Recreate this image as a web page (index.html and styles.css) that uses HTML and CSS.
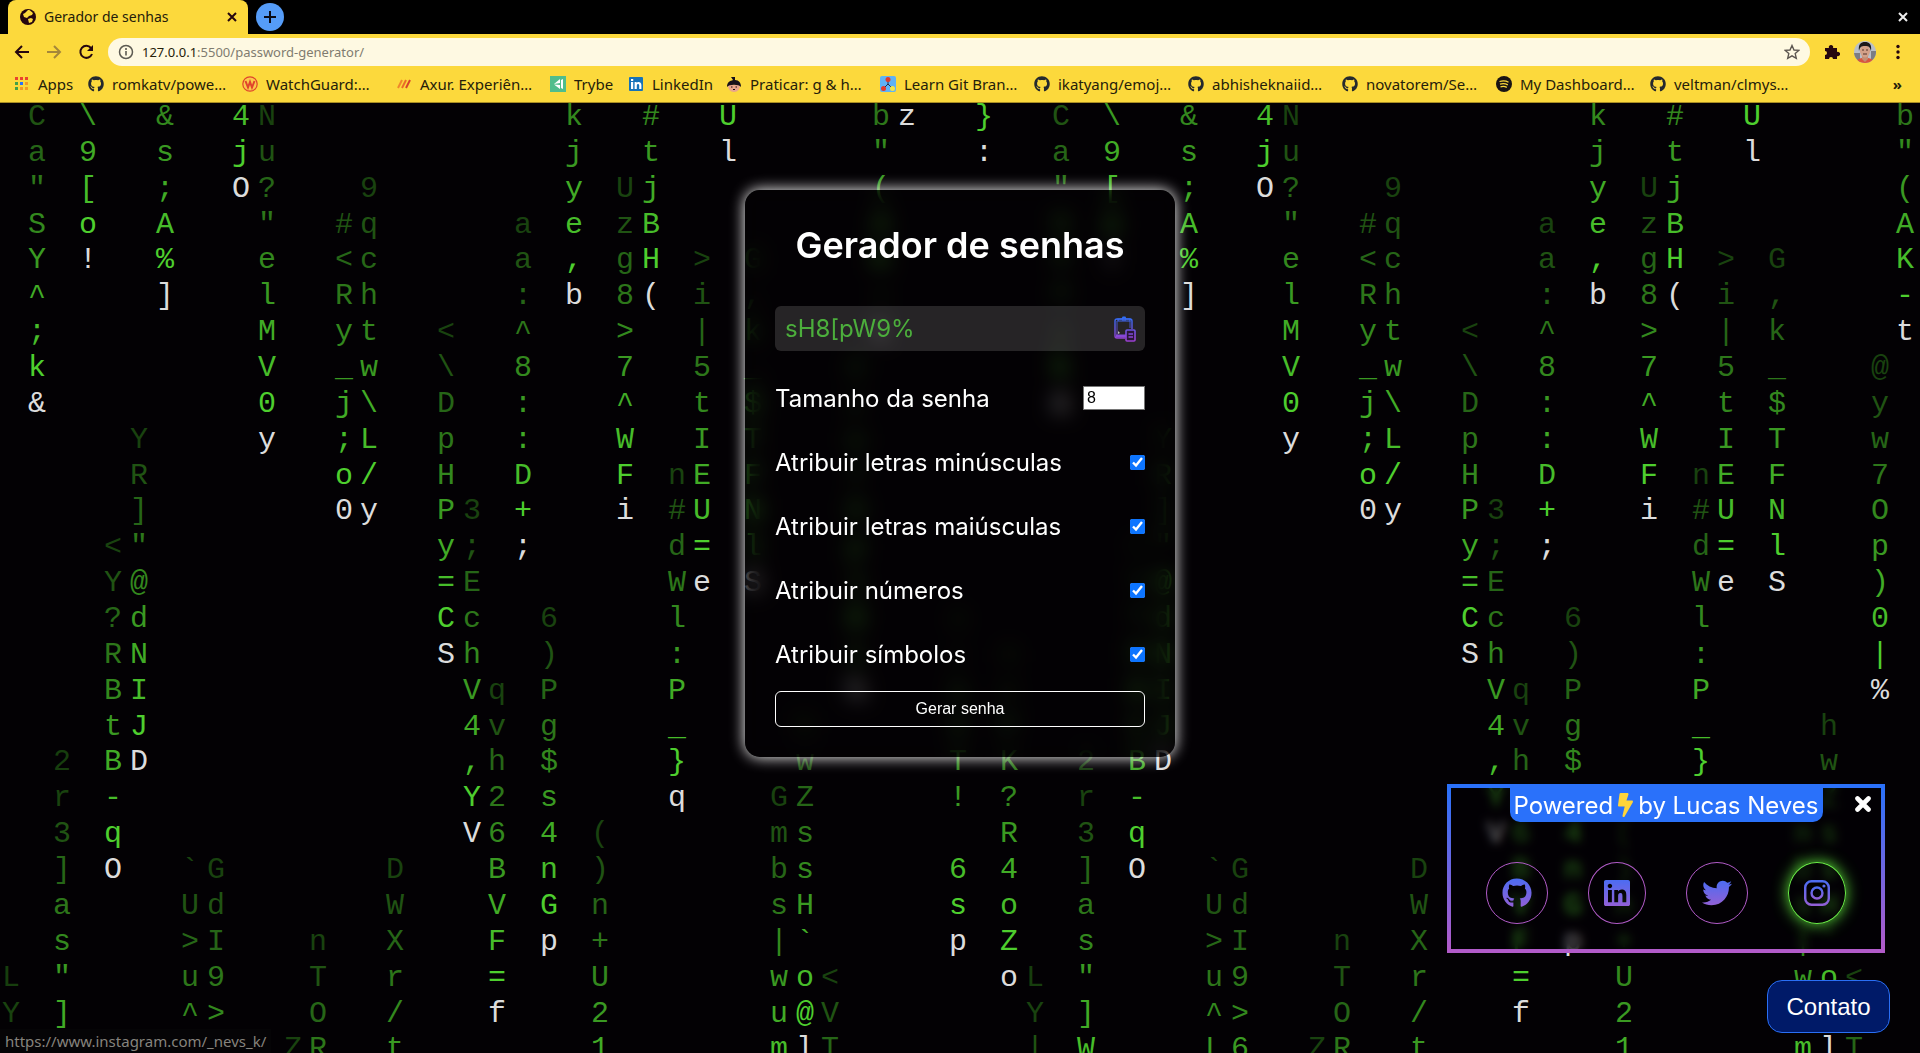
FILE: index.html
```html
<!DOCTYPE html>
<html lang="pt-BR">
<head>
<meta charset="utf-8">
<title>Gerador de senhas</title>
<link rel="stylesheet" href="styles.css">
</head>
<body>
<svg class="defs" aria-hidden="true">
  <defs>
    <linearGradient id="brand" x1="0" y1="0" x2="0" y2="1"><stop offset="0" stop-color="#4c6cf2"/><stop offset="1" stop-color="#9160d6"/></linearGradient>
    <linearGradient id="clip" gradientUnits="userSpaceOnUse" x1="0" y1="0" x2="0" y2="24"><stop offset="0" stop-color="#2a71fa"/><stop offset="1" stop-color="#9a3fd0"/></linearGradient>
    <symbol id="github" viewBox="0 0 496 512"><path d="M165.900 397.400c0 2-2.300 3.600-5.200 3.600-3.300.3-5.600-1.300-5.600-3.600 0-2 2.300-3.600 5.200-3.600 3-.3 5.600 1.300 5.600 3.600zm-31.100-4.500c-.7 2 1.300 4.300 4.300 4.900 2.600 1 5.600 0 6.200-2s-1.300-4.300-4.300-5.200c-2.600-.7-5.500.3-6.200 2.300zm44.200-1.700c-2.900.7-4.900 2.600-4.600 4.900.3 2 2.900 3.300 5.900 2.600 2.900-.7 4.900-2.600 4.600-4.600-.3-1.900-3-3.200-5.900-2.900zM244.800 8C106.100 8 0 113.300 0 252c0 110.900 69.800 205.800 169.500 239.200 12.800 2.300 17.300-5.600 17.300-12.100 0-6.200-.3-40.400-.3-61.400 0 0-70 15-84.700-29.800 0 0-11.400-29.100-27.800-36.600 0 0-22.900-15.700 1.600-15.400 0 0 24.900 2 38.600 25.800 21.900 38.600 58.600 27.500 72.900 20.900 2.300-16 8.800-27.100 16-33.700-55.900-6.200-112.300-14.300-112.300-110.500 0-27.500 7.600-41.300 23.600-58.900-2.600-6.500-11.100-33.300 2.600-67.900 20.900-6.500 69 27 69 27 20-5.600 41.500-8.500 62.800-8.500s42.800 2.900 62.800 8.500c0 0 48.100-33.600 69-27 13.700 34.700 5.200 61.400 2.600 67.900 16 17.700 25.800 31.500 25.800 58.900 0 96.500-58.900 104.200-114.800 110.500 9.200 7.900 17 22.900 17 46.400 0 33.700-.3 75.400-.3 83.600 0 6.500 4.600 14.400 17.300 12.100C428.200 457.800 496 362.900 496 252 496 113.300 383.500 8 244.800 8z"/></symbol>
  </defs>
</svg>

<div class="browser">
  <header class="chrome">
    <div class="tabstrip">
      <div class="tab">
        <svg class="i16" viewBox="0 0 16 16"><circle cx="8" cy="8" r="8" fill="#25060f"/><path d="M8 1c3 0 3 2 5 3l-1 2-3 1-2 2-3-1-1-3 2-1zM8 10l3-1 2 1-1 3-3 1z" fill="#fcd93c"/></svg>
        <span class="tab-title">Gerador de senhas</span>
        <button class="icon-btn" aria-label="Fechar aba"><svg width="10" height="10" viewBox="0 0 10 10"><path d="M1 1l8 8M9 1l-8 8" stroke="#25060f" stroke-width="2"/></svg></button>
      </div>
      <button class="new-tab" aria-label="Nova aba"><svg width="12" height="12" viewBox="0 0 12 12"><path d="M6 0v12M0 6h12" stroke="#0a0a14" stroke-width="2"/></svg></button>
      <button class="icon-btn window-close" aria-label="Fechar janela"><svg width="10" height="10" viewBox="0 0 10 10"><path d="M1 1l8 8M9 1l-8 8" stroke="#eee" stroke-width="2"/></svg></button>
    </div>
    <div class="toolbar">
      <div class="history">
        <button class="icon-btn" aria-label="Voltar"><svg width="16" height="16" viewBox="0 0 16 16"><path d="M15 8H2M8 2L2 8l6 6" fill="none" stroke="#25060f" stroke-width="2"/></svg></button>
        <button class="icon-btn" aria-label="Avançar"><svg width="16" height="16" viewBox="0 0 16 16"><path d="M1 8h13M8 2l6 6-6 6" fill="none" stroke="#a4873a" stroke-width="2"/></svg></button>
        <button class="icon-btn" aria-label="Recarregar"><svg width="16" height="16" viewBox="0 0 16 16"><path d="M13 4a6 6 0 1 0 1 6" fill="none" stroke="#25060f" stroke-width="2"/><path d="M15 1v6H9z" fill="#25060f"/></svg></button>
      </div>
      <div class="omnibox">
        <svg class="i16" viewBox="0 0 16 16"><circle cx="8" cy="8" r="6.500" fill="none" stroke="#5c5a52" stroke-width="1.500"/><path d="M8 7v4.500M8 4v2" stroke="#5c5a52" stroke-width="1.600"/></svg>
        <span class="url"><b>127.0.0.1</b>:5500/password-generator/</span>
        <svg class="i16" viewBox="0 0 16 16"><path d="M8 1.500l2 4.500 4.800.4-3.600 3.200 1.100 4.700L8 11.800l-4.300 2.500 1.100-4.700L1.200 6.400 6 6z" fill="none" stroke="#5c5650" stroke-width="1.400"/></svg>
      </div>
      <button class="icon-btn" aria-label="Extensões"><svg width="16" height="16" viewBox="0 0 16 16"><path d="M1 4h4a2.200 2.200 0 1 1 4 0h4v4a2.200 2.200 0 1 1 0 4v3H9a2 2 0 1 0-4 0H1v-4a2 2 0 1 0 0-4z" fill="#25060f"/></svg></button>
      <svg class="avatar" viewBox="0 0 22 22"><clipPath id="av"><circle cx="11" cy="11" r="11"/></clipPath><g clip-path="url(#av)"><path fill="#b9bfc8" d="M0 0h22v22H0z"/><path fill="#7c7d84" d="M0 12h6v10H0zM17 10h5v9h-5z"/><path d="M2 22c1-5 5-5 9-5s8 0 9 5z" fill="#d9563e"/><path d="M8 13h6v5l-3 3-3-3z" fill="#c48e74"/><ellipse cx="11" cy="10" rx="5" ry="6.500" fill="#d3a088"/><path d="M5 10C4 3 7 1 11 1s7 2 6 9c-1-4-2-5-6-5s-5 1-6 5z" fill="#1c181a"/><path d="M8 9h2M12 9h2M9 13h4" stroke="#54342a"/></g></svg>
      <button class="icon-btn" aria-label="Menu"><svg width="16" height="16" viewBox="0 0 16 16" fill="#25060f"><circle cx="8" cy="2.500" r="1.700"/><circle cx="8" cy="8" r="1.700"/><circle cx="8" cy="13.500" r="1.700"/></svg></button>
    </div>
    <nav class="bookmarks">
      <a href="#" class="bm bm-apps"><svg class="i16" viewBox="0 0 16 16"><path d="M1 1h3v3H1zM6 1h3v3H6zM11 1h3v3h-3z" fill="#e8432e"/><path d="M1 6h3v3H1zM1 11h3v3H1z" fill="#43a047"/><path d="M6 6h3v3H6z" fill="#2a71fa"/><path d="M11 6h3v3h-3zM6 11h3v3H6zM11 11h3v3h-3z" fill="#f59b23"/></svg>Apps</a>
      <a href="#" class="bm"><svg class="i16 gh"><use href="#github"/></svg>romkatv/powe…</a>
      <a href="#" class="bm"><svg class="i16" viewBox="0 0 16 16"><circle cx="8" cy="8" r="7.200" fill="#fbc94a" stroke="#e0442b" stroke-width="1.200"/><path d="M3.500 5l2.500 6.500L8 6l2 5.500L12.500 5" fill="none" stroke="#e0442b" stroke-width="2"/></svg>WatchGuard:…</a>
      <a href="#" class="bm"><svg class="i16" viewBox="0 0 16 16"><path d="M2 12l4-8" stroke="#f0862a" stroke-width="2"/><path d="M6 12l4-8" stroke="#ea6a2a" stroke-width="2"/><path d="M10 12l4-8" stroke="#d8432a" stroke-width="2"/></svg>Axur. Experiên…</a>
      <a href="#" class="bm bm-trybe"><svg class="i16" viewBox="0 0 16 16"><path d="M0 0h16v16H0z" fill="#50bd8c"/><path d="M4 8l6-5v4zM4 8.500L10 9v4zM11 4l2-1v10l-2-1z" fill="#fff"/></svg>Trybe</a>
      <a href="#" class="bm bm-linkedin"><svg class="i16" viewBox="0 0 16 16"><rect x="1" y="1" width="14" height="14" rx="1" fill="#1673b8"/><path d="M3 6h2.200v7H3zM3 3h2.200v2H3zM6.600 6h2v1c1-1.600 4.800-1.600 4.800 2v4h-2.200V9.500c0-2-2.400-2-2.400 0V13H6.600z" fill="#fff"/></svg>LinkedIn</a>
      <a href="#" class="bm"><svg class="i16" viewBox="0 0 16 16"><path d="M2 9h12c0 4-2 7-6 7s-6-3-6-7z" fill="#e9a58c"/><path d="M1 11C1 6 4 5 7 4L5 1l4 0v3c4 0 6 3 6 7-2-3-12-3-14 0z" fill="#17111a"/><path d="M5 11h1.500M9.500 11H11M7 13.500h2" stroke="#17111a"/></svg>Praticar: g &amp; h…</a>
      <a href="#" class="bm"><svg class="i16" viewBox="0 0 16 16"><rect width="16" height="16" rx="2" fill="#5fb2f6"/><path d="M8 4v4L4 12M8 8l4 4" stroke="#24314a" fill="none"/><circle cx="8" cy="3.500" r="2.500" fill="#e2392b"/><circle cx="3.500" cy="12.500" r="2.500" fill="#e2392b"/><circle cx="12.500" cy="12.500" r="2.500" fill="#f6e545"/></svg>Learn Git Bran…</a>
      <a href="#" class="bm"><svg class="i16 gh"><use href="#github"/></svg>ikatyang/emoj…</a>
      <a href="#" class="bm"><svg class="i16 gh"><use href="#github"/></svg>abhisheknaiid…</a>
      <a href="#" class="bm"><svg class="i16 gh"><use href="#github"/></svg>novatorem/Se…</a>
      <a href="#" class="bm"><svg class="i16" viewBox="0 0 16 16"><circle cx="8" cy="8" r="8" fill="#191414"/><path d="M3.500 5.500c3-1 6.500-.8 9 .7M4 8.200c2.600-.8 5.500-.6 7.800.7M4.500 10.800c2-.6 4.500-.5 6.300.6" fill="none" stroke="#fcd93c" stroke-width="1.300"/></svg>My Dashboard…</a>
      <a href="#" class="bm"><svg class="i16 gh"><use href="#github"/></svg>veltman/clmys…</a>
      <button class="more" aria-label="Mais favoritos">»</button>
    </nav>
  </header>

  <main class="page">
    <svg class="rain" id="rain" aria-hidden="true"></svg>
    <form class="card">
      <h1>Gerador de senhas</h1>
      <div class="password">
        <output class="password-text" for="length">sH8[pW9%</output>
        <button type="button" class="copy" aria-label="Copiar senha"><svg width="24" height="26" viewBox="0 0 24 26" fill="none" stroke="url(#clip)"><path d="M12 22H4a2 2 0 0 1-2-2V5a2 2 0 0 1 2-2h13a2 2 0 0 1 2 2v8" stroke-width="1.400"/><path d="M4 20V5M17 12V5" stroke-width=".8"/><path d="M3 20h10" stroke-width="3"/><path d="M5 5V3h4l1-2h2l1 2h4v2zM10 2h2v3h-2z" stroke-width="1.200"/><rect x="13" y="14" width="9" height="11" rx="1" stroke-width="1.600" fill="#2a1638"/><path d="M15.500 18h4.500M15.500 21h4.500" stroke-width="1.500"/><path d="M5 15l2 2-2 1z" fill="#bbb" stroke="none"/></svg></button>
      </div>
      <div class="row"><label for="length">Tamanho da senha</label><input class="number" id="length" type="number" value="8"></div>
      <div class="row"><label for="lower">Atribuir letras minúsculas</label><input class="check" id="lower" type="checkbox" checked></div>
      <div class="row"><label for="upper">Atribuir letras maiúsculas</label><input class="check" id="upper" type="checkbox" checked></div>
      <div class="row"><label for="numbers">Atribuir números</label><input class="check" id="numbers" type="checkbox" checked></div>
      <div class="row"><label for="symbols">Atribuir símbolos</label><input class="check" id="symbols" type="checkbox" checked></div>
      <button type="button" class="generate">Gerar senha</button>
    </form>

    <aside class="contact">
      <p class="powered">Powered <svg width="15" height="24" viewBox="0 0 320 512"><path fill="#ffd43b" d="M296 160H180.600l42.600-129.800C227.200 15 215.700 0 200 0H56C44 0 33.800 8.900 32.200 20.800l-32 240C-1.700 275.200 9.500 288 24 288h118.700L96.600 482.500c-3.600 15.200 8 29.500 23.300 29.500 8.400 0 16.400-4.400 20.800-12l176-304c9.300-15.900-2.200-36-20.700-36z"/></svg> by Lucas Neves</p>
      <button class="contact-close" aria-label="Fechar"><svg width="16" height="16" viewBox="0 0 16 16"><path d="M2.500 2.500l11 11M13.500 2.500l-11 11" stroke="#fff" stroke-width="4.600" stroke-linecap="round"/></svg></button>
      <div class="social">
        <a href="#" aria-label="GitHub"><svg width="30" height="30" fill="url(#brand)"><use href="#github"/></svg></a>
        <a href="#" aria-label="LinkedIn"><svg width="26" height="30" viewBox="0 0 448 512"><path fill="url(#brand)" d="M416 32H31.900C14.300 32 0 46.500 0 64.300v383.400C0 465.500 14.300 480 31.900 480H416c17.600 0 32-14.500 32-32.300V64.300c0-17.800-14.400-32.300-32-32.300zM135.400 416H69V202.200h66.500V416zm-33.200-243c-21.300 0-38.500-17.300-38.500-38.500S80.900 96 102.200 96c21.200 0 38.500 17.300 38.500 38.500 0 21.300-17.200 38.500-38.500 38.500zm282.100 243h-66.400V312c0-24.800-.5-56.700-34.500-56.700-34.600 0-39.900 27-39.900 54.900V416h-66.400V202.200h63.700v29.200h.9c8.900-16.800 30.600-34.500 62.900-34.500 67.200 0 79.700 44.300 79.700 101.900V416z"/></svg></a>
        <a href="#" aria-label="Twitter"><svg width="30" height="30" viewBox="0 0 512 512"><path fill="url(#brand)" d="M459.370 151.716c.325 4.548.325 9.097.325 13.645 0 138.720-105.583 298.558-298.558 298.558-59.452 0-114.680-17.219-161.137-47.106 8.447.974 16.568 1.299 25.340 1.299 49.055 0 94.213-16.568 130.274-44.832-46.132-.975-84.792-31.188-98.112-72.772 6.498.974 12.995 1.624 19.818 1.624 9.421 0 18.843-1.300 27.614-3.573-48.081-9.747-84.143-51.980-84.143-102.985v-1.299c13.969 7.797 30.214 12.670 47.431 13.319-28.264-18.843-46.781-51.005-46.781-87.391 0-19.492 5.197-37.360 14.294-52.954 51.655 63.675 129.300 105.258 216.365 109.807-1.624-7.797-2.599-15.918-2.599-24.040 0-57.828 46.782-104.934 104.934-104.934 30.213 0 57.502 12.670 76.670 33.137 23.715-4.548 46.456-13.320 66.599-25.340-7.798 24.366-24.366 44.833-46.132 57.827 21.117-2.273 41.584-8.122 60.426-16.243-14.292 20.791-32.161 39.308-52.628 54.253z"/></svg></a>
        <a href="#" class="active" aria-label="Instagram"><svg width="26" height="30" viewBox="0 0 448 512"><g fill="none" stroke="url(#brand)" stroke-width="42"><rect x="21" y="53" width="406" height="406" rx="108"/><circle cx="224" cy="256" r="94"/></g><circle cx="344" cy="136" r="27" fill="#5a6aec"/></svg></a>
      </div>
    </aside>
    <button class="contact-btn">Contato</button>
    <div class="status">https://www.instagram.com/_nevs_k/</div>
  </main>
</div>
<script src="rain.js"></script>
</body>
</html>
```
FILE: styles.css
```css
* { box-sizing: border-box; }
body { margin: 0; background: #030104; font-family: Inter, "Open Sans", sans-serif; color: #fff; }
button { font: inherit; border: 0; background: none; padding: 0; color: inherit; cursor: pointer; }
a { color: inherit; text-decoration: none; }
.defs { position: absolute; width: 0; height: 0; }
.i16 { width: 16px; height: 16px; flex: none; }
.gh { fill: #24292e; }

.browser { display: flex; flex-direction: column; min-height: 100vh; }
.chrome { font: 14px/20px "Noto Sans", sans-serif; color: #25200a; background: #fcd93c; border-bottom: 1px solid #a88d24; }

.tabstrip { display: flex; align-items: center; height: 34px; padding: 0 12px 0 8px; background: #000; }
.tab { display: flex; align-items: center; gap: 8px; width: 240px; height: 34px; padding: 0 11px 0 12px; border-radius: 8px 8px 0 0; background: #fcd93c; }
.tab-title { flex: 1; }
.icon-btn { display: grid; place-items: center; flex: none; }
.new-tab { display: grid; place-items: center; width: 28px; height: 28px; margin-left: 8px; border-radius: 50%; background: #559cf8; }
.window-close { margin-left: auto; }

.toolbar { display: flex; align-items: center; gap: 14px; height: 36px; padding: 0 14px; }
.history { display: flex; gap: 16px; }
.omnibox { display: flex; align-items: center; gap: 8px; flex: 1; height: 28px; padding: 0 10px; border-radius: 14px; background: #fef9e2; color: #807c70; font-size: 13px; }
.url { flex: 1; }
.url b { font-weight: 400; color: #25200a; }
.avatar { width: 22px; height: 22px; flex: none; }

.bookmarks { display: flex; align-items: center; gap: 18px; height: 32px; padding: 0 14px 4px; font-size: 15px; white-space: nowrap; overflow: hidden; }
.bm { display: flex; align-items: center; gap: 8px; width: 136px; flex: none; }
.bm-apps { width: 56px; }
.bm-trybe { width: 60px; }
.bm-linkedin { width: 80px; }
.more { margin-left: auto; padding-right: 4px; font-weight: 700; }

.page { position: relative; flex: 1; display: flex; justify-content: center; align-items: flex-start; padding: 87px 0 40px; overflow: hidden; }
.rain { position: absolute; inset: 0; width: 100%; height: 100%; font: 30px "Courier New", "Liberation Mono", monospace; text-anchor: middle; }

.card { position: relative; display: flex; flex-direction: column; width: 430px; padding: 30px; border-radius: 15px; background: rgba(3, 1, 4, .5); backdrop-filter: blur(10px); box-shadow: 0 0 15px #fff; }
h1 { margin: 0 0 36px; font-size: 36px; line-height: 50px; font-weight: 600; text-align: center; }
.password { display: flex; align-items: center; justify-content: space-between; height: 45px; margin-bottom: 15px; padding: 0 8px 0 10px; border-radius: 6px; background: rgba(255, 255, 255, .14); }
.password-text { font-size: 24px; color: #4cae3c; }
.copy { display: grid; }
.row { display: flex; align-items: center; justify-content: space-between; height: 64px; font-size: 24px; }
.number { width: 62px; height: 24px; padding: 0 3px; border: 1px solid #767676; border-radius: 0; background: #fff; color: #000; font: 16px "Liberation Sans", Arial, sans-serif; }
.check { width: 15px; height: 15px; margin: 0; accent-color: #0d75ff; }
.generate { height: 36px; margin-top: 5px; border: 1px solid #fff; border-radius: 6px; font: 16px "Liberation Sans", Arial, sans-serif; }

.contact { position: absolute; right: 35px; bottom: 100px; width: 438px; height: 169px; border: 4px solid; border-image: linear-gradient(#2a71fa, #b25bc9) 1; backdrop-filter: blur(5px); background: rgba(3, 1, 4, .4); }
.powered { display: flex; justify-content: center; align-items: center; gap: 5px; width: 313px; height: 34px; margin: 0 auto; border-radius: 0 0 10px 10px; background: #2a71fa; font-size: 24px; white-space: nowrap; }
.contact-close { position: absolute; top: 8px; right: 10px; display: grid; }
.social { display: grid; grid-template-columns: repeat(4, 1fr); place-items: center; padding: 40px 14px 0 16px; }
.social a { display: grid; padding: 15px; border: 1px solid #b25bc9; border-radius: 50%; }
.social .active { border-color: #6bee48; box-shadow: 0 0 15px #5be03a; }
.contact-btn { position: absolute; right: 30px; bottom: 20px; width: 123px; height: 53px; border: 1px solid #2a6ff5; border-radius: 15px; background: #001a68; font: 24px "Liberation Sans", Arial, sans-serif; }
.status { position: absolute; left: 0; bottom: 0; height: 24px; padding: 0 5px; background: #050406; color: #85837d; font: 15px/24px "Noto Sans", sans-serif; }
```
FILE: rain.js
```js
// Each stream: [column, first row, characters, row of the white head]
const streams = [
  [0, 24, 'LY|', 34], [1, 0, 'Ca"SY^;k&', 8], [2, 18, '2r3]as"]W', 28],
  [3, 0, '\\9[o!', 4], [4, 12, '<Y?RBtB-qO', 21], [5, 9, 'YR]"@dNIJD', 18],
  [6, 0, '&s;A%]', 5], [7, 21, '`U>u^L', 30], [8, 21, 'GdI9>6', 30],
  [9, 0, '4jO', 2], [10, 0, 'Nu?"elMV0y', 9], [11, 26, 'Z', 35],
  [12, 23, 'nTOR', 32], [13, 3, '#<Ry_j;o0', 11], [14, 2, '9qchtw\\L/y', 11],
  [15, 21, 'DWXr/t', 30], [17, 6, '<\\DpHPy=CS', 15], [18, 11, '3;EchV4,YV', 20],
  [19, 16, 'qvh26BVF=f', 25], [20, 3, 'aa:^8::D+;', 12], [21, 14, '6)Pg$s4nGp', 23],
  [22, 0, 'kjye,b', 5], [23, 20, '()n+U21', 29], [24, 2, 'Uzg8>7^WFi', 11],
  [25, 0, '#tjBH(', 5], [26, 10, 'n#dWl:P_}q', 19], [27, 4, '>i|5tIEU=e', 13],
  [28, 0, 'Ul', 1], [29, 4, 'G,k_$TFNlS', 13], [30, 19, 'Gmbs|wum', 28],
  [31, 17, 'hwZssH`o@l', 26], [32, 24, '<VT', 33], [33, 7, '@yw7Op)0|%', 16],
  [34, 0, 'b"(AK-t', 6], [35, 0, 'z', 0], [37, 14, 'x;aVT! 6sp', 23],
  [38, 0, '}:', 1], [39, 15, 'ncPK?R4oZo', 24]
];
const TILE = 1024, COLUMNS = 40, ROW = 35.86;
const NS = 'http://www.w3.org/2000/svg';
const rain = document.getElementById('rain');

// Green fades out with the distance from the head
function shade(distance) {
  if (distance === 0) return '#dcdcdc';
  const level = Math.max(0.3, 1 - (distance - 1) * 0.085);
  return `rgb(${[78, 206, 46].map(part => Math.round(part * level)).join(',')})`;
}

function paint() {
  rain.replaceChildren();
  for (let left = 0; left < window.innerWidth; left += TILE) {
    for (const [column, first, chars, head] of streams) {
      [...chars].forEach((char, i) => {
        const row = first + i;
        const glyph = document.createElementNS(NS, 'text');
        glyph.textContent = char;
        glyph.setAttribute('x', Math.round(left + 11 + column * TILE / COLUMNS));
        glyph.setAttribute('y', Math.round(22 + row * ROW));
        glyph.setAttribute('fill', shade(head - row));
        rain.append(glyph);
      });
    }
  }
}
paint();
window.addEventListener('resize', paint);
```
